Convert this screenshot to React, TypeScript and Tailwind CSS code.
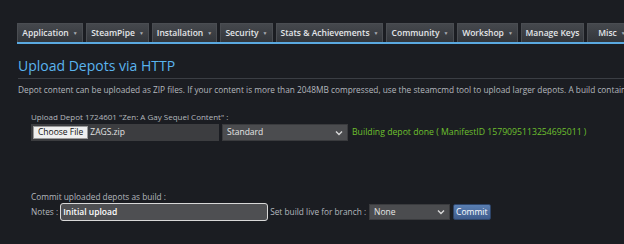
import React from 'react';

interface Tab {
  label: string;
  w: string;
  menu?: boolean;
}

const tabs: Tab[] = [
  { label: 'Application', w: 'w-[66px]', menu: true },
  { label: 'SteamPipe', w: 'w-[63px]', menu: true },
  { label: 'Installation', w: 'w-[65px]', menu: true },
  { label: 'Security', w: 'w-[53px]', menu: true },
  { label: 'Stats & Achievements', w: 'w-[107px]', menu: true },
  { label: 'Community', w: 'w-[68px]', menu: true },
  { label: 'Workshop', w: 'w-[61px]', menu: true },
  { label: 'Manage Keys', w: 'w-[63px]' },
  { label: 'Misc', w: 'w-[50px]', menu: true }
];

function Caret() {
  return <span className="ml-[4px] text-[5px] text-[#a9adb3] leading-none">▼</span>;
}

function Chevron() {
  return (
    <svg width="8" height="6" viewBox="0 0 8 6" className="shrink-0">
      <path d="M1 1.5 L4 4.5 L7 1.5" fill="none" stroke="#d8d8d8" strokeWidth="1.4" />
    </svg>
  );
}

export default function App() {
  return (
    <div className="w-[624px] h-[244px] overflow-hidden bg-[#1b1d22] text-[#b8bcc2] font-['Open_Sans',sans-serif]">
      <nav className="pt-[23px] pl-[17px]">
        <div className="flex gap-[3px] whitespace-nowrap">
          {tabs.map((t) => (
            <div
              key={t.label}
              className={`${t.w} shrink-0 h-[19px] flex items-center justify-center border border-b-0 border-[#4a4d52] bg-gradient-to-b from-[#45484d] to-[#33363b] text-[8.5px] font-semibold text-[#e4e6e9]`}
            >
              {t.label}
              {t.menu && <Caret />}
            </div>
          ))}
        </div>
        <div className="h-[2px] bg-[#5aa9e0]" />
      </nav>

      <section className="pl-[18px] pt-[13px]">
        <h2 className="text-[14px] leading-[18px] text-[#5ab4ee] font-normal">Upload Depots via HTTP</h2>
        <div className="mt-[3px] h-px bg-[#3b3e44]" />
        <p className="mt-[5px] text-[8.3px] leading-[12px] whitespace-nowrap text-[#b4b8be]">
          Depot content can be uploaded as ZIP files. If your content is more than 2048MB compressed, use the steamcmd tool to upload larger depots. A build contains
        </p>
      </section>

      <section className="pl-[31px] pt-[15px] text-[8px]">
        <div className="leading-[11px] text-[#b4b8be]">Upload Depot 1724601 "Zen: A Gay Sequel Content" :</div>
        <div className="mt-[2px] flex items-center gap-[3px]">
          <div className="w-[188px] h-[17px] bg-[#3c3d40] flex items-center pl-[2px]">
            <span className="h-[13px] px-[4px] flex items-center bg-[#efefef] border border-[#9a9a9a] text-[#111] text-[8.5px]">Choose File</span>
            <span className="ml-[2px] text-[#e2e2e2] text-[8.5px]">ZAGS.zip</span>
          </div>
          <div className="w-[126px] h-[17px] bg-[#4b4c4f] border border-[#3a3b3e] flex items-center justify-between px-[4px] text-[#e6e6e6] text-[8.5px]">
            <span>Standard</span>
            <Chevron />
          </div>
          <span className="ml-[1px] text-[#6ec02e] text-[8.7px] whitespace-nowrap">Building depot done ( ManifestID 1579095113254695011 )</span>
        </div>
      </section>

      <section className="pl-[31px] pt-[50px] text-[8.3px]">
        <div className="leading-[11px] text-[#b4b8be]">Commit uploaded depots as build :</div>
        <div className="mt-[1px] flex items-center whitespace-nowrap">
          <span className="text-[#b4b8be]">Notes :</span>
          <div className="ml-[2px] w-[208px] h-[18px] rounded-[3px] border border-[#d8d8d8] bg-[#4e4f52] flex items-center px-[2px] text-white text-[8.5px] font-semibold">
            Initial upload
          </div>
          <span className="ml-[2px] text-[#b4b8be]">Set build live for branch :</span>
          <div className="ml-[3px] w-[81px] h-[16px] bg-[#4b4c4f] border border-[#3a3b3e] flex items-center justify-between px-[4px] text-[#e6e6e6] text-[8.5px]">
            <span>None</span>
            <Chevron />
          </div>
          <span className="ml-[3px] h-[16px] px-[2px] flex items-center rounded-[2px] bg-gradient-to-b from-[#5a7fb3] to-[#3f5c8c] border border-[#2d4468] text-white text-[8.5px] font-medium">Commit</span>
        </div>
      </section>
    </div>
  );
}
